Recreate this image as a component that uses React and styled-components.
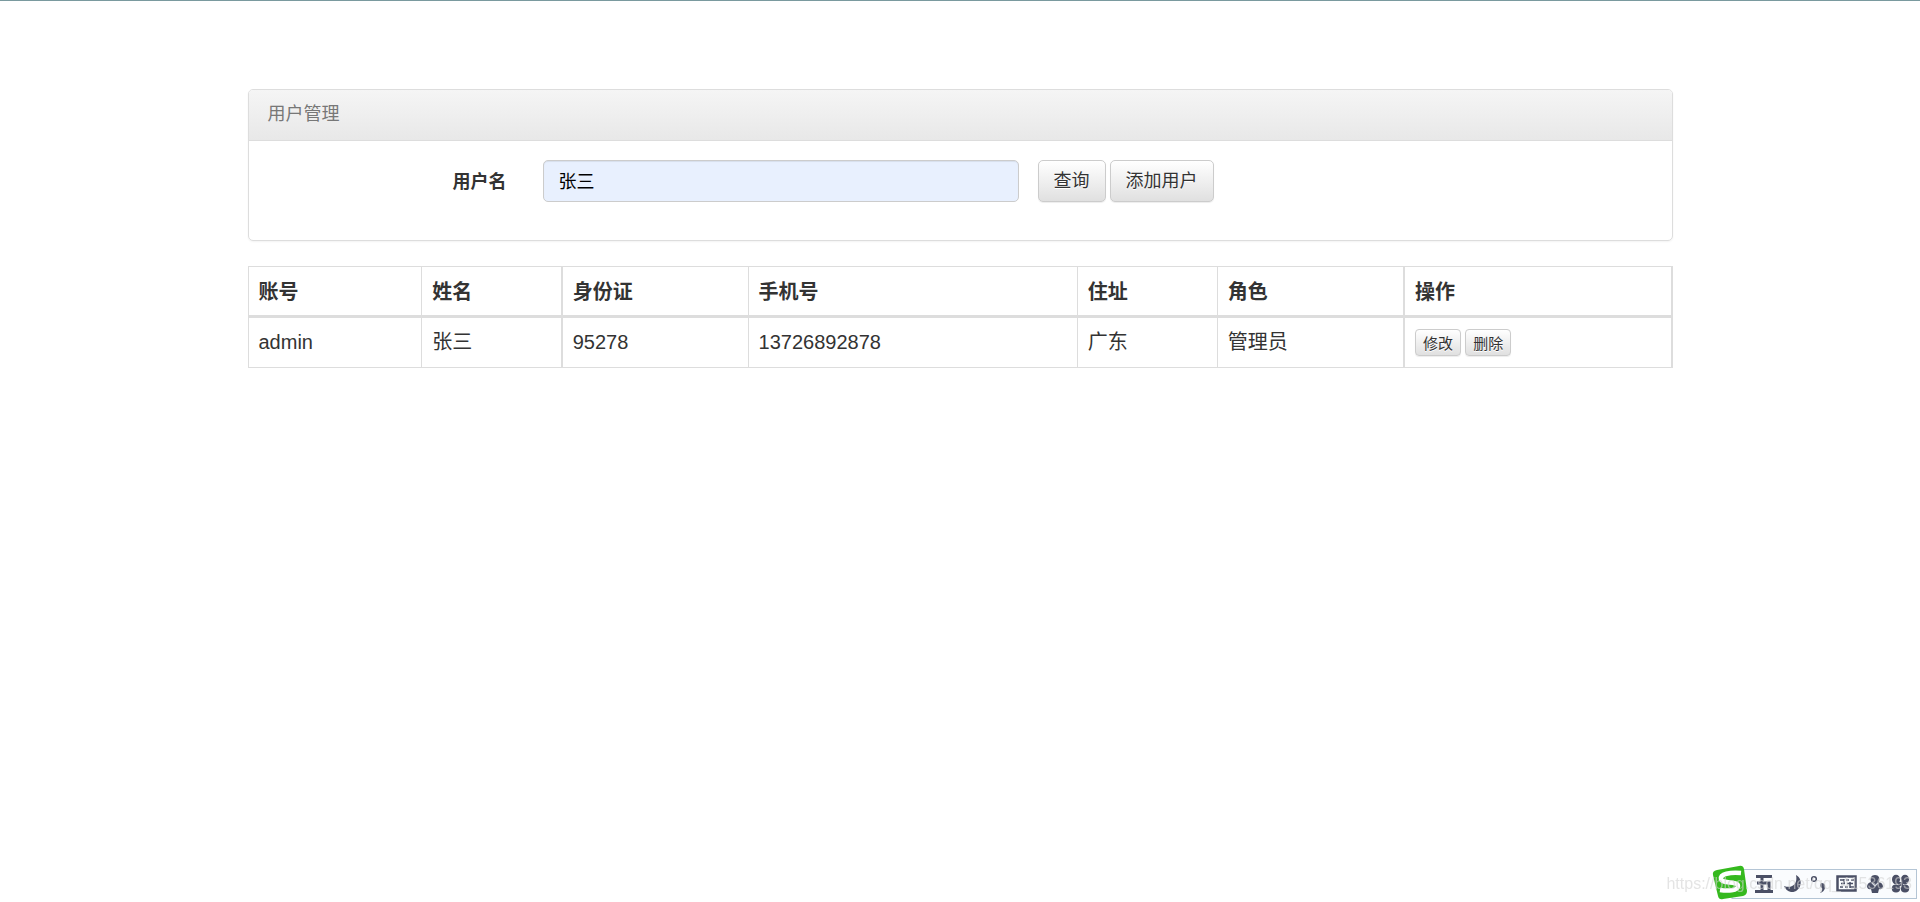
import React, { useState } from 'react';
import styled, { createGlobalStyle } from 'styled-components';

const GlobalStyle = createGlobalStyle`
  *, *::before, *::after { box-sizing: border-box; }
  body {
    margin: 0;
    border-top: 1px solid #7a9a9f;
    background: #fff;
    color: #333;
    font-family: "Liberation Sans", "Noto Sans CJK SC", sans-serif;
    font-size: 18px;
    line-height: 25px;
  }
`;

const Container = styled.main`
  max-width: 1425px;
  margin: 88px auto 0;
`;

const Panel = styled.section`
  border: 1px solid #ddd;
  border-radius: 5px;
  box-shadow: 0 1px 2px rgba(0, 0, 0, 0.05);
  margin-bottom: 25px;
`;

const PanelHeading = styled.h1`
  margin: 0;
  padding: 12px 19px 13px;
  border-bottom: 1px solid #ddd;
  border-radius: 4px 4px 0 0;
  background: linear-gradient(to bottom, #f5f5f5 0%, #e8e8e8 100%);
  color: #777;
  font-size: 18px;
  font-weight: 400;
`;

const SearchForm = styled.form`
  display: grid;
  grid-template-columns: 275fr 476fr 634fr;
  align-items: center;
  padding: 19px 19px 38px;
`;

const FieldLabel = styled.label`
  padding: 2px 36px 0 0;
  text-align: right;
  font-weight: 700;
`;

const TextInput = styled.input`
  width: 100%;
  height: 42px;
  margin: 0;
  padding: 6px 15px 8px;
  border: 1px solid #ccc;
  border-radius: 5px;
  background: #e8f0fe;
  box-shadow: inset 0 1px 1px rgba(0, 0, 0, 0.075);
  color: #000;
  font: inherit;
`;

const Actions = styled.div`
  display: flex;
  gap: 4px;
`;

const FormActions = styled(Actions)`
  margin-left: 19px;
`;

const Button = styled.button`
  height: ${(p) => (p.$small ? 27 : 42)}px;
  padding: ${(p) => (p.$small ? '0 7px' : '0 15px 4px')};
  border: 1px solid #ccc;
  border-radius: ${(p) => (p.$small ? 4 : 5)}px;
  background: linear-gradient(to bottom, #fff 0%, #e0e0e0 100%);
  box-shadow: inset 0 1px 0 rgba(255, 255, 255, 0.15), 0 1px 1px rgba(0, 0, 0, 0.075);
  color: #333;
  font-family: inherit;
  font-size: ${(p) => (p.$small ? 15 : 18)}px;
  text-shadow: 0 1px 0 #fff;
  white-space: nowrap;
  cursor: pointer;
`;

const UserTable = styled.table`
  width: 100%;
  table-layout: fixed;
  border-collapse: collapse;
  font-size: 20px;
  line-height: 29px;
`;

const Column = styled.col`
  width: ${(p) => p.$share}%;
`;

const HeadCell = styled.th`
  height: 50px;
  padding: 10px 10px 8px;
  border: 1px solid #ddd;
  border-left-width: ${(p) => (p.$heavy ? 2 : 1)}px;
  border-bottom-width: 3px;
  text-align: left;
  font-weight: 700;
  &:last-child { border-right-width: 2px; }
`;

const Cell = styled.td`
  height: 51px;
  padding: 9px 10px;
  border: 1px solid #ddd;
  border-left-width: ${(p) => (p.$heavy ? 2 : 1)}px;
  &:last-child { border-right-width: 2px; }
`;

const Watermark = styled.span`
  position: fixed;
  right: 8px;
  bottom: 8px;
  color: rgba(210, 210, 210, 0.6);
  font-size: 16px;
  line-height: 20px;
`;

const ImeBar = styled.aside`
  position: fixed;
  right: 2px;
  bottom: 1px;
  svg { display: block; }
`;

const columns = [
  { title: '账号', key: 'account', share: 12.2 },
  { title: '姓名', key: 'name', share: 9.84 },
  { title: '身份证', key: 'idCard', share: 13.09, heavy: true },
  { title: '手机号', key: 'phone', share: 23.13 },
  { title: '住址', key: 'address', share: 9.84 },
  { title: '角色', key: 'role', share: 13.12 },
];

const users = [
  { account: 'admin', name: '张三', idCard: '95278', phone: '13726892878', address: '广东', role: '管理员' },
];

function InputMethodIcons() {
  return (
    <svg width="206" height="36" viewBox="0 0 206 36" aria-hidden="true">
      <rect x="20" y="4.500" width="184.500" height="29" fill="#fafcfe" stroke="#b4c5d5" />
      <path d="M5 5 L27 1 Q31 0 32 4 L35 26 Q35 30 31 31 L11 34 Q7 35 6 31 L1 10 Q0 6 5 5Z" fill="#35b91e" />
      <path d="M29 8 C18 7 8 9 9 14 C10 19 26 16 26 21 C26 26 15 26 8 25" fill="none" stroke="#fff" strokeWidth="4.500" />
      <path d="M44 11.500H60M43 26.500H61M50 12V26M45 18H57V26" fill="none" stroke="#4a4f65" strokeWidth="3" />
      <path d="M84 10 C93 15 88 28 79 27 Q74 26 72 21 C80 24 86 19 84 10Z" fill="#4a4f65" />
      <circle cx="102" cy="14" r="2.300" fill="none" stroke="#4a4f65" strokeWidth="1.500" />
      <path d="M109 18 Q114 18 113 23 Q112 27 108 28 Q111 25 110 23 Q107 22 109 18Z" fill="#4a4f65" />
      <rect x="125.500" y="11.500" width="18" height="14" fill="none" stroke="#4a4f65" strokeWidth="2.500" />
      <path d="M128 15H132M134 15H137M139 15H142M129 18.500H133M135 18.500H141M128 22H131M133 22H136M138 22H142M132 14V19M138 17V23" stroke="#4a4f65" strokeWidth="1.500" />
      <path d="M163 10 C167 10 168 13 167 17 Q171 18 171 22 Q170 25 167 24 L166 28 H160 L159 24 Q156 25 155 22 Q155 18 159 17 C158 13 159 10 163 10Z" fill="#4a4f65" />
      <path d="M160 18 L163 21 L166 18" fill="none" stroke="#d4d8e2" strokeWidth="1.200" />
      <g fill="#4a4f65">
        <ellipse cx="184" cy="14.500" rx="4" ry="4.800" />
        <ellipse cx="193" cy="14.500" rx="4" ry="4.800" />
        <ellipse cx="184" cy="23.500" rx="4.200" ry="4" />
        <ellipse cx="193" cy="23.500" rx="4.200" ry="4" />
        <rect x="186" y="17" width="5" height="4" />
      </g>
    </svg>
  );
}

export default function App() {
  const [keyword, setKeyword] = useState('张三');
  return (
    <>
      <GlobalStyle />
      <Container>
        <Panel>
          <PanelHeading>用户管理</PanelHeading>
          <SearchForm onSubmit={(e) => e.preventDefault()}>
            <FieldLabel htmlFor="username">用户名</FieldLabel>
            <TextInput id="username" type="text" value={keyword} onChange={(e) => setKeyword(e.target.value)} />
            <FormActions>
              <Button type="submit">查询</Button>
              <Button type="button">添加用户</Button>
            </FormActions>
          </SearchForm>
        </Panel>
        <UserTable>
          <colgroup>
            {columns.map((c) => <Column key={c.key} $share={c.share} />)}
            <col />
          </colgroup>
          <thead>
            <tr>
              {columns.map((c) => <HeadCell key={c.key} scope="col" $heavy={c.heavy}>{c.title}</HeadCell>)}
              <HeadCell scope="col" $heavy>操作</HeadCell>
            </tr>
          </thead>
          <tbody>
            {users.map((u) => (
              <tr key={u.account}>
                {columns.map((c) => <Cell key={c.key} $heavy={c.heavy}>{u[c.key]}</Cell>)}
                <Cell $heavy>
                  <Actions>
                    <Button type="button" $small>修改</Button>
                    <Button type="button" $small>删除</Button>
                  </Actions>
                </Cell>
              </tr>
            ))}
          </tbody>
        </UserTable>
      </Container>
      <ImeBar aria-label="输入法">
        <InputMethodIcons />
      </ImeBar>
      <Watermark>https://blog.csdn.net/qq_41536193</Watermark>
    </>
  );
}
